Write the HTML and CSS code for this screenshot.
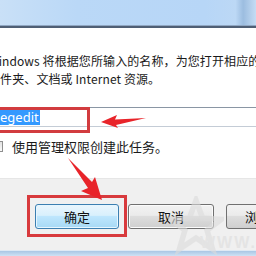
FILE: index.html
```html
<!DOCTYPE html>
<html>
<head>
<meta charset="utf-8">
<link rel="stylesheet" href="styles.css">
</head>
<body>
<div class="win">
  <div class="titlebar"></div>
  <div class="content">
    <p class="desc">Windows 将根据您所输入的名称，为您打开相应的程序、<br>文件夹、文档或 Internet 资源。</p>
    <div class="openrow">
      <div class="inputbox"><span class="sel">egedit</span></div>
      <div class="mark"></div>
    </div>
    <div class="checkrow"><span class="check"></span><span>使用管理权限创建此任务。</span></div>
  </div>
  <div class="footer">
    <div class="ok-wrap"><button class="btn primary">确定</button></div>
    <button class="btn cancel">取消</button>
    <button class="btn browse">浏览(B)...</button>
  </div>
  <div class="bottom"></div>

  <svg class="arrow1" width="50" height="14" viewBox="0 0 50 14"><polygon points="1,7 17,0 15,4.5 46,3 16,10 18,13" fill="#e8242a"/></svg>
  <svg class="arrow2" width="40" height="44" viewBox="0 0 40 44"><polygon points="0,0 24,24 27,19 34,42 13,33 20,30" fill="#e8242a"/></svg>
  <svg class="star" width="56" height="62" viewBox="0 0 50 56"><path d="M25 4 L31 20 L48 21 L35 31 L40 48 L25 38 L10 48 L15 31 L2 21 L19 20 Z" fill="none" stroke="#dcdcdc" stroke-width="5"/></svg>
  <div class="wm">WWW.</div>
</div>
</body>
</html>
```
FILE: styles.css
```css
* { box-sizing: border-box; }
html, body { margin: 0; padding: 0; }
body { width: 256px; height: 256px; overflow: hidden; background: #fff; font-family: "Noto Sans CJK SC", "Noto Sans", sans-serif; }
.win { position: relative; width: 256px; height: 256px; display: flex; flex-direction: column; }
.titlebar { height: 28px; flex: none; background: linear-gradient(90deg, #c9e0f7 0%, #bad8f7 30%, #b7d6f7 80%, #bcd8f5 92%, #9cbde0 95%, #c4dcf4 100%); border-bottom: 2px solid #4f5f75; box-shadow: inset 0 -1px 0 #8fa6c2; }
.content { height: 150px; flex: none; background: #fff; padding-top: 24px; overflow: hidden; }
.desc { margin: 0 0 0 -12px; font-size: 12px; line-height: 18px; color: #1a1a1a; white-space: nowrap; letter-spacing: 0.1px; }
.openrow { margin-top: 19px; height: 26px; position: relative; }
.inputbox { height: 20px; margin-top: 3px; border-top: 1px solid #8a96a4; border-bottom: 1px solid #c4ccd6; display: flex; align-items: center; }
.sel { background: #3399ff; color: #fff; font-size: 13px; line-height: 15px; padding-right: 1px; font-family: "Noto Sans", sans-serif; }
.mark { position: absolute; left: -4px; top: 0; width: 94px; height: 26px; border: 3px solid #d23c3f; }
.checkrow { margin-top: 4px; display: flex; align-items: center; gap: 9px; font-size: 13px; color: #1a1a1a; height: 18px; }
.check { width: 12px; height: 11px; margin-left: -9px; border: 1px solid #8f8f8f; background: linear-gradient(#e2e2e2, #fafafa); }
.footer { flex: 1; background: #f0f0f0; display: flex; align-items: center; padding-left: 27px; padding-top: 3px; border-top: 1px solid #e6e6e6; }
.ok-wrap { border: 3px solid #d83a3d; padding: 5px 5px; margin-right: 1px; }
.btn { height: 25px; width: 86px; font-family: "Noto Sans CJK SC", sans-serif; font-size: 13px; color: #111; border-radius: 3px; padding: 0; flex: none; }
.primary { width: 84px; border: 1px solid #3c7fb1; background: linear-gradient(#eaf6fd 0%, #d9f0fc 45%, #bee6fd 50%, #a7d9f5 100%); box-shadow: inset 0 0 0 1px #e6f6ff; }
.cancel { margin-right: 12px; border: 1px solid #707070; background: linear-gradient(#f2f2f2 0%, #ebebeb 45%, #dddddd 50%, #cfcfcf 100%); box-shadow: inset 0 0 0 1px #fbfbfb; }
.browse { border: 1px solid #707070; background: linear-gradient(#f2f2f2 0%, #ebebeb 45%, #dddddd 50%, #cfcfcf 100%); text-align: left; padding-left: 18px; }
.bottom { height: 6px; flex: none; background: linear-gradient(#a9c6e4, #cfe2f5); border-top: 1px solid #dfe9f4; }
.arrow1 { position: absolute; left: 100px; top: 115px; }
.arrow2 { position: absolute; left: 68px; top: 158px; }
.star { position: absolute; left: 168px; top: 196px; opacity: 0.6; }
.wm { position: absolute; left: 200px; top: 234px; font: bold 16px "Liberation Sans", sans-serif; color: #e4e4e4; letter-spacing: 2px; }
```
